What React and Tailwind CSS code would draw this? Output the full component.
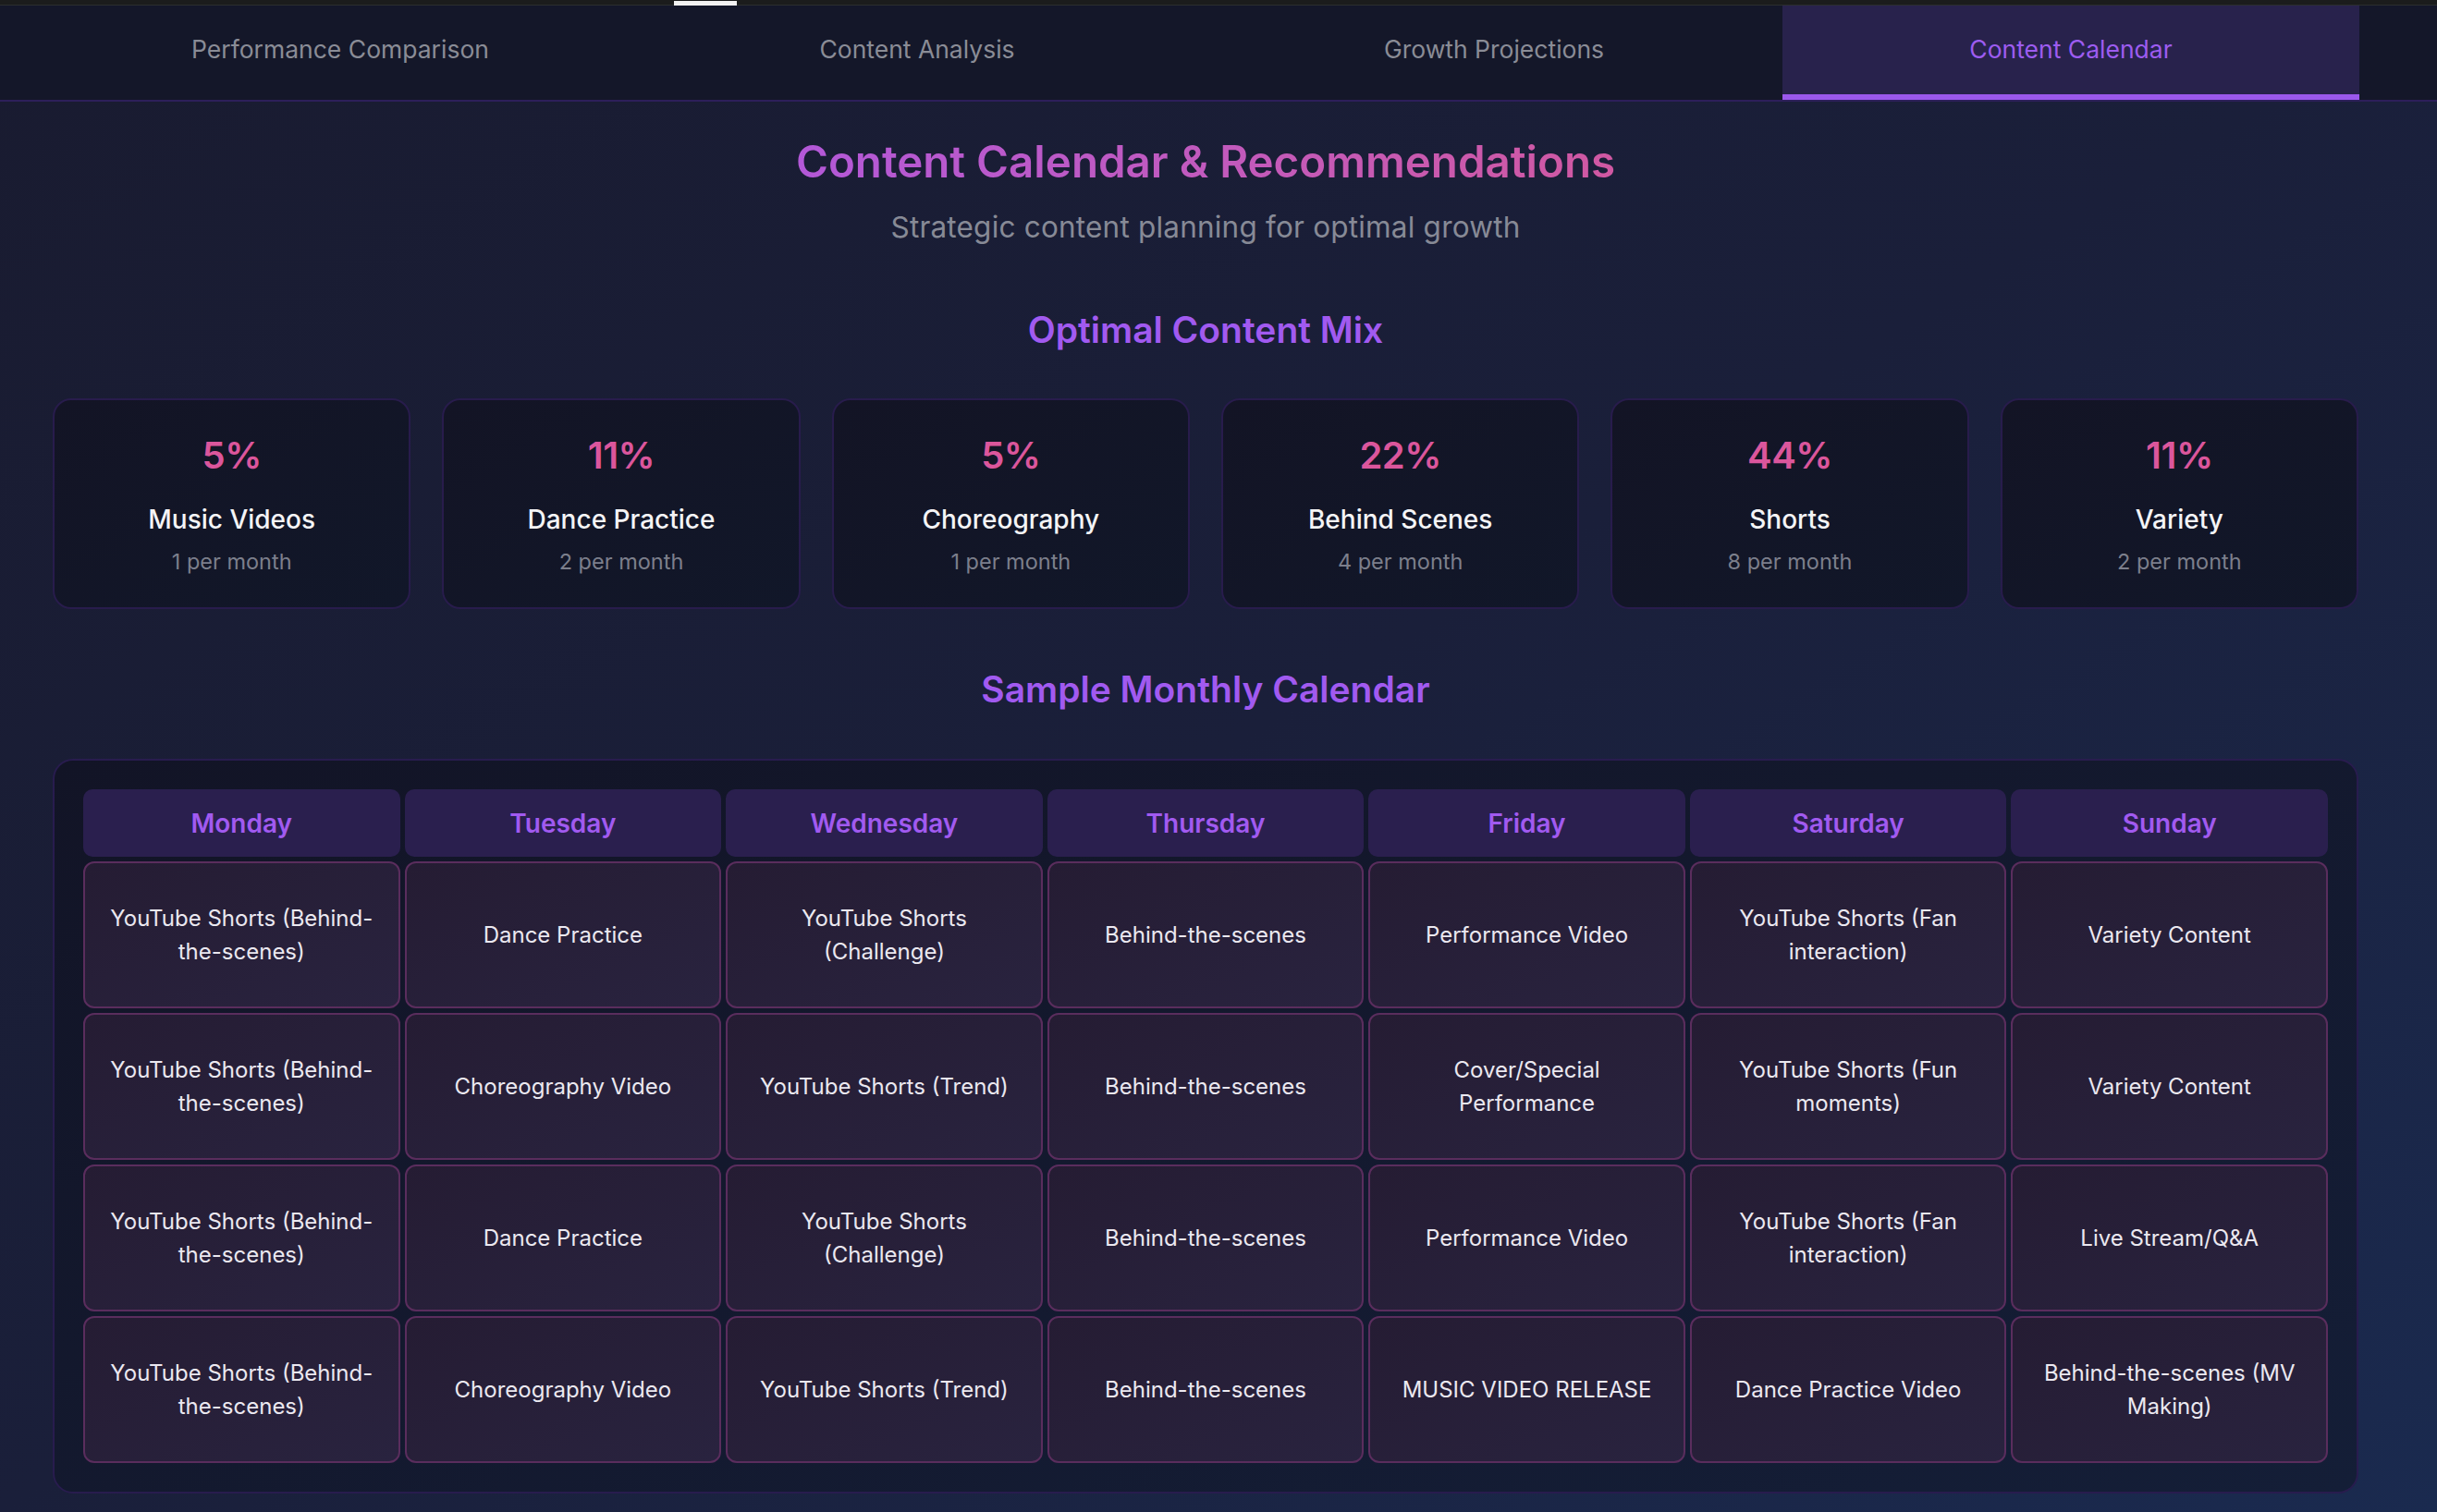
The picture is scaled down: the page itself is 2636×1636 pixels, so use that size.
import React from "react";

const tabs = ["Performance Comparison", "Content Analysis", "Growth Projections", "Content Calendar"];

const mix = [
  { pct: "5%", name: "Music Videos", freq: "1 per month" },
  { pct: "11%", name: "Dance Practice", freq: "2 per month" },
  { pct: "5%", name: "Choreography", freq: "1 per month" },
  { pct: "22%", name: "Behind Scenes", freq: "4 per month" },
  { pct: "44%", name: "Shorts", freq: "8 per month" },
  { pct: "11%", name: "Variety", freq: "2 per month" },
];

const days = ["Monday", "Tuesday", "Wednesday", "Thursday", "Friday", "Saturday", "Sunday"];

const weeks = [
  [
    "YouTube Shorts (Behind-the-scenes)",
    "Dance Practice",
    "YouTube Shorts (Challenge)",
    "Behind-the-scenes",
    "Performance Video",
    "YouTube Shorts (Fan interaction)",
    "Variety Content",
  ],
  [
    "YouTube Shorts (Behind-the-scenes)",
    "Choreography Video",
    "YouTube Shorts (Trend)",
    "Behind-the-scenes",
    "Cover/Special Performance",
    "YouTube Shorts (Fun moments)",
    "Variety Content",
  ],
  [
    "YouTube Shorts (Behind-the-scenes)",
    "Dance Practice",
    "YouTube Shorts (Challenge)",
    "Behind-the-scenes",
    "Performance Video",
    "YouTube Shorts (Fan interaction)",
    "Live Stream/Q&A",
  ],
  [
    "YouTube Shorts (Behind-the-scenes)",
    "Choreography Video",
    "YouTube Shorts (Trend)",
    "Behind-the-scenes",
    "MUSIC VIDEO RELEASE",
    "Dance Practice Video",
    "Behind-the-scenes (MV Making)",
  ],
];

function MixCard({ item }) {
  return (
    <div className="flex h-[228px] flex-col items-center justify-center rounded-[20px] border-2 border-[#281c4c] bg-gradient-to-br from-[#131425] to-[#111729]">
      <div className="text-[40px] font-semibold leading-[50px] tracking-[-0.5px] text-[#db569c]">{item.pct}</div>
      <div className="mt-[26px] text-[28px] font-medium leading-[36px] text-[#f4f4f6]">{item.name}</div>
      <div className="mt-[13px] text-[23.5px] leading-[30px] text-[#7c7f8c]">{item.freq}</div>
    </div>
  );
}

function SectionHeading({ children }) {
  return (
    <h3 className="text-center text-[39px] font-semibold leading-[48px] text-[#a15af0]">{children}</h3>
  );
}

export default function App() {
  return (
    <div
      className="min-h-[1636px] bg-gradient-to-br from-[#191b30] via-[#1a1f3a] to-[#1a2a4f] text-white"
      style={{ fontFamily: "Inter, 'Noto Sans', 'Liberation Sans', sans-serif" }}
    >
      {/* window strip */}
      <div className="flex h-[6px] border-b border-[#2c2e2e] bg-[#1b1c1c]">
        <div className="ml-[729px] mt-px h-[5px] w-[68px] bg-[#f2f2f2]" />
      </div>

      {/* tab bar */}
      <div className="border-b-2 border-[#2d1f5a] bg-[#141729]">
        <div className="flex pl-[56px] pr-[84px]">
          {tabs.map((t) => {
            const active = t === "Content Calendar";
            return (
              <div
                key={t}
                className={`flex h-[102px] flex-1 items-center justify-center border-b-[6px] text-[26.5px] ${
                  active
                    ? "border-[#9b58ec] bg-[#28224c] text-[#9d5cf0]"
                    : "border-transparent text-[#8a8c96]"
                }`}
              >
                {t}
              </div>
            );
          })}
        </div>
      </div>

      <div className="pl-[57px] pr-[85px] pb-[20px]">
        <h2 className="mt-[36px] text-center text-[47.5px] font-semibold leading-[58px]">
          <span className="bg-gradient-to-r from-[#b358d8] to-[#d058a2] bg-clip-text text-transparent">
            Content Calendar &amp; Recommendations
          </span>
        </h2>
        <p className="mt-[22px] text-center text-[31.5px] leading-[40px] tracking-[0.2px] text-[#878a96]">
          Strategic content planning for optimal growth
        </p>

        <div className="mt-[67px]">
          <SectionHeading>Optimal Content Mix</SectionHeading>
        </div>
        <div className="mt-[50px] grid grid-cols-6 gap-[34px]">
          {mix.map((m) => (
            <MixCard key={m.name} item={m} />
          ))}
        </div>

        <div className="mt-[63px]">
          <SectionHeading>Sample Monthly Calendar</SectionHeading>
        </div>

        <div className="mt-[51px] rounded-[22px] border-2 border-[#281c4e] bg-gradient-to-br from-[#121426] to-[#141e37] p-[31px]">
          <div className="grid grid-cols-7 gap-[5px]">
            {days.map((d) => (
              <div
                key={d}
                className="flex h-[73px] items-center justify-center rounded-[10px] bg-[#2a1f4e] text-[28px] font-semibold text-[#a15af0]"
              >
                {d}
              </div>
            ))}
            {weeks.map((week, wi) =>
              week.map((c, ci) => (
                <div
                  key={`${wi}-${ci}`}
                  className="flex h-[159px] items-center justify-center rounded-[12px] border-2 border-[#5a2d5d] bg-gradient-to-br from-[#251c33] to-[#29233f] px-[24px] text-center text-[24px] leading-[36px] text-[#ebe8f0]"
                >
                  {c}
                </div>
              ))
            )}
          </div>
        </div>
      </div>
    </div>
  );
}
